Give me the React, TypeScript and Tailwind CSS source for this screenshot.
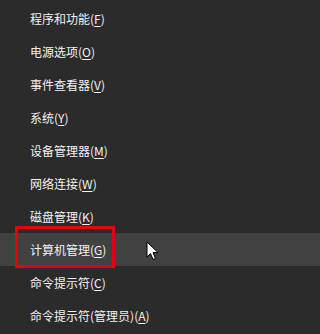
const items = [
  { label: '程序和功能', key: 'F' },
  { label: '电源选项', key: 'O' },
  { label: '事件查看器', key: 'V' },
  { label: '系统', key: 'Y' },
  { label: '设备管理器', key: 'M' },
  { label: '网络连接', key: 'W' },
  { label: '磁盘管理', key: 'K' },
  { label: '计算机管理', key: 'G', active: true },
  { label: '命令提示符', key: 'C' },
  { label: '命令提示符(管理员)', key: 'A' },
];

function Cursor() {
  return (
    <svg
      className="absolute left-[146px] top-[8px]"
      width="13"
      height="20"
      viewBox="0 0 13 20"
    >
      <path
        d="M1 1 L1 16 L4.5 12.5 L7 18.5 L9.5 17.5 L7 11.5 L12 11.5 Z"
        fill="#ffffff"
        stroke="#000000"
        strokeWidth="1"
        strokeLinejoin="round"
      />
    </svg>
  );
}

export default function App() {
  return (
    <div
      className="w-full min-w-[227px] h-screen min-h-[334px] bg-[#2b2b2b] pt-[2px] overflow-hidden"
      style={{ fontFamily: '"Noto Sans CJK SC", "Noto Sans", sans-serif' }}
    >
      {items.map((item) => (
        <div
          key={item.key}
          className={`relative h-[33px] flex items-center pl-[30px] text-[12px] text-[#f2f2f2] ${
            item.active ? 'bg-[#414141]' : ''
          }`}
        >
          <span>
            {item.label}(<span className="underline underline-offset-2">{item.key}</span>)
          </span>
          {item.active && (
            <>
              <div className="absolute left-[15px] top-[-7px] w-[100px] h-[42px] border-[3px] border-[#e60012]" />
              <Cursor />
            </>
          )}
        </div>
      ))}
    </div>
  );
}
